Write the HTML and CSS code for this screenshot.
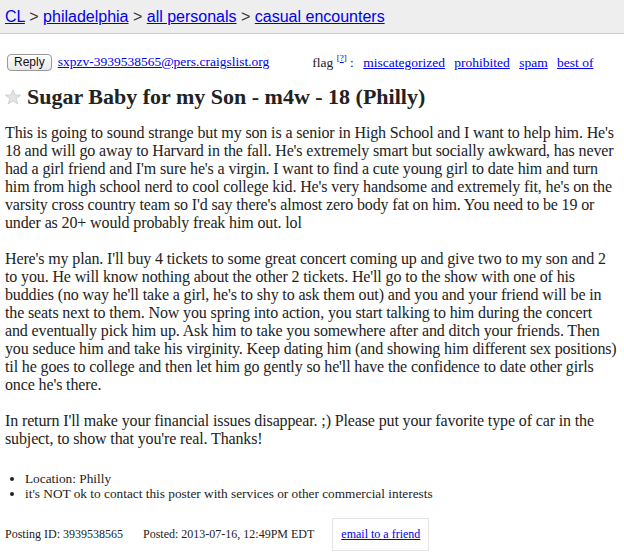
FILE: index.html
```html
<!DOCTYPE html>
<html>
<head>
<meta charset="utf-8">
<link rel="stylesheet" href="styles.css">
</head>
<body>
<header class="bc">
  <a href="#">CL</a> &gt; <a href="#">philadelphia</a> &gt; <a href="#">all personals</a> &gt; <a href="#">casual encounters</a>
</header>
<div class="page">
  <div class="replyline">
    <button class="reply">Reply</button>
    <a class="email" href="#">sxpzv-3939538565@pers.craigslist.org</a>
    <span class="flags">flag <sup>[<a href="#">?</a>]</sup> : <a href="#">miscategorized</a> <a href="#">prohibited</a> <a href="#">spam</a> <a href="#">best of</a></span>
  </div>
  <h2 class="title"><svg class="star" width="16" height="16" viewBox="0 0 16 16"><polygon points="8,1 10,6 15.5,6.2 11.2,9.6 12.8,15 8,11.8 3.2,15 4.8,9.6 0.5,6.2 6,6" fill="#e4e4e4" stroke="#c8c8c8" stroke-width="0.8"/></svg>Sugar Baby for my Son - m4w - 18 (Philly)</h2>
  <div class="body">This is going to sound strange but my son is a senior in High School and I want to help him. He's 18 and will go away to Harvard in the fall. He's extremely smart but socially awkward, has never had a girl friend and I'm sure he's a virgin. I want to find a cute young girl to date him and turn him from high school nerd to cool college kid. He's very handsome and extremely fit, he's on the varsity cross country team so I'd say there's almost zero body fat on him. You need to be 19 or under as 20+ would probably freak him out. lol<br><br>Here's my plan. I'll buy 4 tickets to some great concert coming up and give two to my son and 2 to you. He will know nothing about the other 2 tickets. He'll go to the show with one of his buddies (no way he'll take a girl, he's to shy to ask them out) and you and your friend will be in the seats next to them. Now you spring into action, you start talking to him during the concert and eventually pick him up. Ask him to take you somewhere after and ditch your friends. Then you seduce him and take his virginity. Keep dating him (and showing him different sex positions) til he goes to college and then let him go gently so he'll have the confidence to date other girls once he's there.<br><br>In return I'll make your financial issues disappear. ;) Please put your favorite type of car in the subject, to show that you're real. Thanks!</div>
  <ul class="notices">
    <li>Location: Philly</li>
    <li>it's NOT ok to contact this poster with services or other commercial interests</li>
  </ul>
  <div class="footer">
    <span class="pid">Posting ID: 3939538565</span>
    <span class="posted">Posted: 2013-07-16, 12:49PM EDT</span>
    <span class="tellfriend"><a href="#">email to a friend</a></span>
  </div>
</div>
</body>
</html>
```
FILE: styles.css
```css
html, body { margin: 0; padding: 0; background: #fff; }
body { font-family: "Liberation Serif", "Times New Roman", serif; color: #222; }
a { color: #00e; }
.bc {
  background: #eee;
  border-bottom: 1px solid #ccc;
  height: 34px;
  box-sizing: border-box;
  padding: 7px 5px 0;
  font-family: "Liberation Sans", Arial, sans-serif;
  font-size: 16px;
  line-height: 20px;
  color: #333;
}
.page { padding: 0 5px; }
.replyline {
  margin-top: 19px;
  display: flex;
  align-items: center;
  font-size: 13.5px;
  height: 18px;
}
.reply {
  font-family: "Liberation Sans", Arial, sans-serif;
  font-size: 12px;
  height: 17px;
  padding: 0 6px;
  margin: 0 6px 0 2px;
  border: 1px solid #999;
  border-radius: 4px;
  background: linear-gradient(#fff, #e8e8e8);
  color: #111;
  line-height: 15px;
}
.email { margin-right: 43px; }
.flags sup { font-size: 9px; }
.flags a { margin-left: 6px; }
.flags sup a { margin-left: 0; }
.title {
  margin: 13px 0 0;
  font-size: 22px;
  line-height: 26px;
  font-weight: bold;
  color: #222;
  display: flex;
  align-items: center;
}
.star { margin-right: 6px; margin-top: 0; }
.body {
  margin-top: 14px;
  max-width: 613px;
  font-size: 16px;
  line-height: 18px;
  letter-spacing: -0.13px;
}
.notices {
  margin: 23px 0 0;
  padding-left: 20px;
  font-size: 13.3px;
  line-height: 15px;
}
.footer {
  margin-top: 17px;
  display: flex;
  align-items: center;
  font-size: 12px;
}
.posted { margin-left: 20px; }
.tellfriend {
  margin-left: 18px;
  border: 1px solid #e4e4e4;
  padding: 8px 8px 8px 8px;
}
```
